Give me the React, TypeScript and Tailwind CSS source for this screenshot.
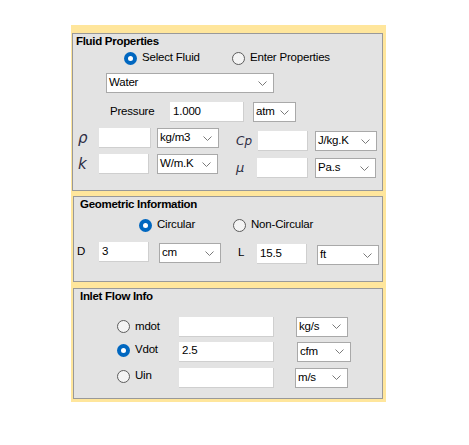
import React from 'react';

const font = { fontFamily: '"Liberation Sans", Arial, sans-serif' };

function Chevron() {
  return (
    <svg width="9" height="5" viewBox="0 0 9 5" className="shrink-0">
      <polyline points="0.5,0.5 4.5,4.5 8.5,0.5" fill="none" stroke="#7a7a7a" strokeWidth="1" />
    </svg>
  );
}

function TextBox({ value = '', className = '' }: { value?: string; className?: string }) {
  return (
    <div className={`h-[20px] bg-white border-b border-r border-[#cfcfcf] flex items-center pl-[3px] text-[11.5px] tracking-[-0.2px] ${className}`}>
      {value}
    </div>
  );
}

function Combo({ value, className = '' }: { value: string; className?: string }) {
  return (
    <div className={`h-[20px] bg-white border border-[#a9a9a9] flex items-center justify-between pl-[2px] pr-[6px] text-[11.5px] tracking-[-0.2px] ${className}`}>
      <span>{value}</span>
      <Chevron />
    </div>
  );
}

function Radio({ checked, label, className = '' }: { checked?: boolean; label: string; className?: string }) {
  return (
    <div className={`flex items-center h-[16px] ${className}`}>
      {checked ? (
        <div className="w-[13px] h-[13px] rounded-full bg-[#0067c0] flex items-center justify-center shrink-0">
          <div className="w-[5px] h-[5px] rounded-full bg-white" />
        </div>
      ) : (
        <div className="w-[13px] h-[13px] rounded-full bg-[#f4f4f4] border border-[#5c5c5c] shrink-0" />
      )}
      <span className="ml-[5px] text-[11.5px] tracking-[-0.2px]">{label}</span>
    </div>
  );
}

function Sym({ children, className = '' }: { children: React.ReactNode; className?: string }) {
  return (
    <div className={`italic text-[#2e2e44] flex items-center h-[20px] ${className}`} style={{ fontFamily: '"DejaVu Sans", sans-serif' }}>
      {children}
    </div>
  );
}

export default function App() {
  return (
    <div className="w-[469px] h-[445px] bg-white text-black" style={font}>
      <div className="pt-[25px] pl-[71px]">
        <div className="w-[315px] h-[377px] bg-[#ffe69c] pt-[8px] pl-[1px] pr-[3px] pb-[3px] flex flex-col">
          {/* Fluid Properties */}
          <div className="h-[158px] bg-[#e3e3e3] border border-[#999999]">
            <div className="pl-[3px] h-[15px] leading-[15px] text-[11.5px] tracking-[-0.3px] font-bold">Fluid Properties</div>
            <div className="mt-[1px] flex">
              <Radio checked label="Select Fluid" className="ml-[51px] w-[108px]" />
              <Radio label="Enter Properties" />
            </div>
            <Combo value="Water" className="mt-[7px] ml-[33px] w-[168px]" />
            <div className="mt-[9px] flex items-center h-[20px]">
              <span className="ml-[37px] w-[60px] text-[11.5px] tracking-[-0.2px]">Pressure</span>
              <TextBox value="1.000" className="w-[74px]" />
              <Combo value="atm" className="ml-[9px] w-[43px]" />
            </div>
            <div className="mt-[6px] flex items-start h-[26px]">
              <Sym className="ml-[5px] w-[21px] text-[15px]">ρ</Sym>
              <TextBox className="w-[52px]" />
              <Combo value="kg/m3" className="ml-[6px] w-[62px]" />
              <div className="mt-[3px] flex">
                <Sym className="ml-[17px] w-[22px] text-[12px]">Cp</Sym>
                <TextBox className="w-[50px]" />
                <Combo value="J/kg.K" className="ml-[7px] w-[62px]" />
              </div>
            </div>
            <div className="flex items-start h-[26px]">
              <Sym className="ml-[5px] w-[21px] text-[15px]">k</Sym>
              <TextBox className="w-[50px]" />
              <Combo value="W/m.K" className="ml-[8px] w-[61px]" />
              <div className="mt-[4px] flex">
                <Sym className="ml-[18px] w-[21px] text-[13px]">μ</Sym>
                <TextBox className="w-[51px]" />
                <Combo value="Pa.s" className="ml-[7px] w-[61px]" />
              </div>
            </div>
          </div>

          {/* Geometric Information */}
          <div className="mt-[5px] ml-[1px] h-[86px] bg-[#e3e3e3] border border-[#999999]">
            <div className="pl-[6px] h-[15px] leading-[15px] text-[11.5px] tracking-[-0.3px] font-bold">Geometric Information</div>
            <div className="mt-[5px] flex">
              <Radio checked label="Circular" className="ml-[65px] w-[94px]" />
              <Radio label="Non-Circular" />
            </div>
            <div className="mt-[9px] flex items-start h-[24px]">
              <span className="ml-[3px] w-[22px] h-[20px] flex items-center text-[11.5px]">D</span>
              <TextBox value="3" className="w-[50px]" />
              <Combo value="cm" className="mt-[1px] ml-[10px] w-[62px]" />
              <span className="ml-[17px] w-[19px] h-[20px] mt-[1px] flex items-center text-[11.5px]">L</span>
              <TextBox value="15.5" className="mt-[2px] w-[50px]" />
              <Combo value="ft" className="mt-[3px] ml-[10px] w-[62px]" />
            </div>
          </div>

          {/* Inlet Flow Info */}
          <div className="mt-[6px] ml-[1px] h-[111px] bg-[#e3e3e3] border border-[#999999]">
            <div className="pl-[6px] h-[15px] leading-[15px] text-[11.5px] tracking-[-0.3px] font-bold">Inlet Flow Info</div>
            <div className="mt-[12px] flex items-center h-[21px]">
              <Radio label="mdot" className="ml-[43px] w-[62px]" />
              <TextBox className="w-[95px]" />
              <Combo value="kg/s" className="ml-[22px] w-[52px]" />
            </div>
            <div className="mt-[4px] flex items-center h-[21px]">
              <Radio checked label="Vdot" className="ml-[43px] w-[62px] -mt-[3px]" />
              <TextBox value="2.5" className="w-[95px]" />
              <Combo value="cfm" className="ml-[23px] w-[54px]" />
            </div>
            <div className="mt-[5px] flex items-center h-[21px]">
              <Radio label="Uin" className="ml-[43px] w-[62px] -mt-[3px]" />
              <TextBox className="w-[95px]" />
              <Combo value="m/s" className="ml-[21px] w-[53px]" />
            </div>
          </div>
        </div>
      </div>
    </div>
  );
}
